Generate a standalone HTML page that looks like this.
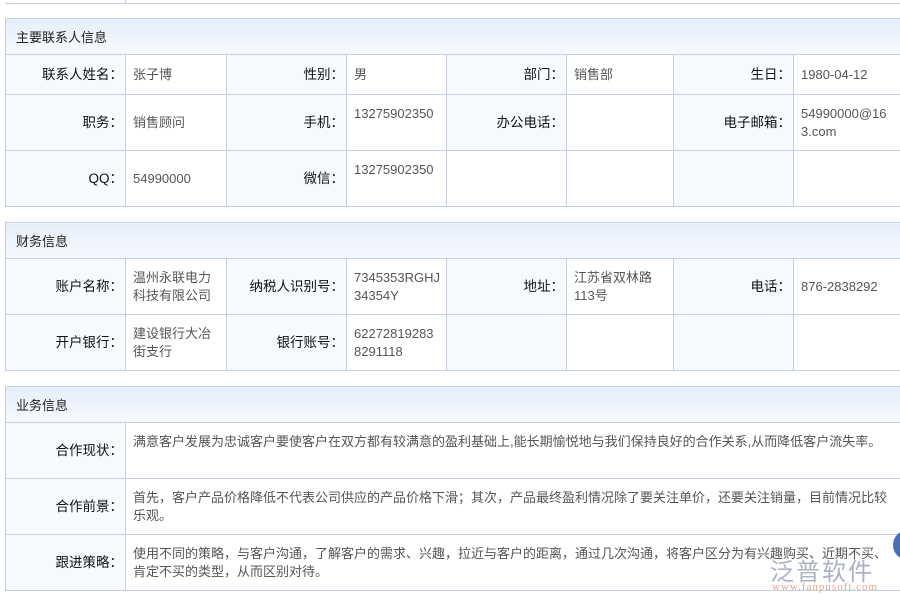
<!DOCTYPE html>
<html><head><meta charset="utf-8"><style>
body{margin:0;width:900px;height:600px;overflow:hidden;background:#fff;font-family:"Liberation Sans","Noto Sans CJK SC",sans-serif;font-size:13px;position:relative}
table{position:absolute;left:5px;width:925px;border-collapse:collapse;table-layout:fixed}
td{border:1px solid #c5cfe0;padding:0 7px;line-height:18px;color:#555;vertical-align:middle;word-break:break-all}
td.l{background:#f6f9fe;color:#111;text-align:right;padding-right:2px;font-size:13.5px}
td.t{vertical-align:top;padding-top:10px}
th{height:35px;padding:0 0 0 10px;border:1px solid #c5cfe0;text-align:left;font-weight:normal;color:#222;background:linear-gradient(#e7eefb,#f6f9ff)}
.wm{position:absolute;left:770px;top:552px;color:#aab3c6;font-size:24px;letter-spacing:2px}
.wm2{position:absolute;left:772px;top:581px;color:#e0a58a;font-size:11px;font-family:"Liberation Serif",serif;letter-spacing:1px}
</style></head><body>
<div style="position:absolute;left:5px;top:3px;width:900px;height:0;border-top:1px solid #c5cfe0"></div>
<div style="position:absolute;left:125px;top:0;height:3px;border-left:1px solid #c5cfe0"></div>
<table style="top:18px">
<colgroup><col style="width:120px"><col style="width:101px"><col style="width:120px"><col style="width:100px"><col style="width:120px"><col style="width:107px"><col style="width:120px"><col style="width:137px"></colgroup>
<tr><th colspan="8">主要联系人信息</th></tr>
<tr style="height:40px"><td class="l">联系人姓名：</td><td>张子博</td><td class="l">性别：</td><td>男</td><td class="l">部门：</td><td>销售部</td><td class="l">生日：</td><td>1980-04-12</td></tr>
<tr style="height:56px"><td class="l">职务：</td><td>销售顾问</td><td class="l">手机：</td><td class="t">13275902350</td><td class="l">办公电话：</td><td></td><td class="l">电子邮箱：</td><td class="t" style="padding-right:40px">54990000@163.com</td></tr>
<tr style="height:56px"><td class="l">QQ：</td><td>54990000</td><td class="l">微信：</td><td class="t">13275902350</td><td class="l" style="background:#fff"></td><td></td><td class="l"></td><td></td></tr>
</table>
<table style="top:222px">
<colgroup><col style="width:120px"><col style="width:101px"><col style="width:120px"><col style="width:100px"><col style="width:120px"><col style="width:107px"><col style="width:120px"><col style="width:137px"></colgroup>
<tr><th colspan="8">财务信息</th></tr>
<tr style="height:56px"><td class="l">账户名称：</td><td>温州永联电力科技有限公司</td><td class="l">纳税人识别号：</td><td style="white-space:nowrap;padding-right:0">7345353RGHJ<br>34354Y</td><td class="l">地址：</td><td>江苏省双林路<br>113号</td><td class="l">电话：</td><td>876-2838292</td></tr>
<tr style="height:56px"><td class="l">开户银行：</td><td>建设银行大冶街支行</td><td class="l">银行账号：</td><td>622728192838291118</td><td class="l"></td><td></td><td class="l"></td><td></td></tr>
</table>
<table style="top:386px">
<colgroup><col style="width:120px"><col style="width:805px"></colgroup>
<tr><th colspan="2">业务信息</th></tr>
<tr style="height:56px"><td class="l">合作现状：</td><td class="t" style="padding-right:35px">满意客户发展为忠诚客户要使客户在双方都有较满意的盈利基础上,能长期愉悦地与我们保持良好的合作关系,从而降低客户流失率。</td></tr>
<tr style="height:56px"><td class="l">合作前景：</td><td class="t" style="padding-right:35px">首先，客户产品价格降低不代表公司供应的产品价格下滑；其次，产品最终盈利情况除了要关注单价，还要关注销量，目前情况比较乐观。</td></tr>
<tr style="height:56px"><td class="l">跟进策略：</td><td class="t" style="padding-right:35px">使用不同的策略，与客户沟通，了解客户的需求、兴趣，拉近与客户的距离，通过几次沟通，将客户区分为有兴趣购买、近期不买、肯定不买的类型，从而区别对待。</td></tr>
</table>
<div style="position:absolute;left:893px;top:530px;width:30px;height:30px;border-radius:50%;background:#4a6fb5"></div>
<div class="wm">泛普软件</div>
<div class="wm2">www.fanpusoft.com</div>
</body></html>
